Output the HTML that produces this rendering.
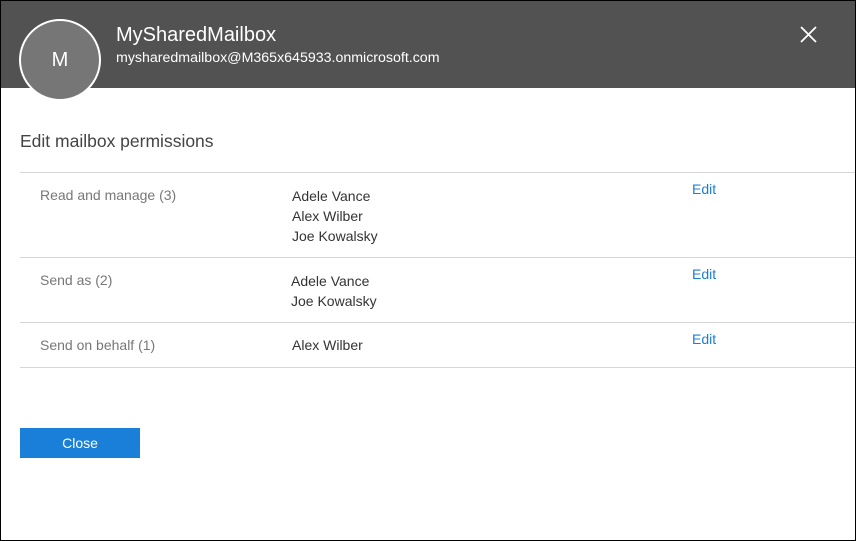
<!DOCTYPE html>
<html><head><style>
*{margin:0;padding:0;box-sizing:border-box}
body{width:856px;height:541px;overflow:hidden;background:#fff;font-family:"Segoe UI","Liberation Sans",sans-serif;position:relative}
.frame{position:absolute;left:0;top:0;width:856px;height:541px;border:1px solid #000;pointer-events:none;z-index:5}
.hdr{position:absolute;left:0;top:0;width:856px;height:88px;background:#525252}
.av{position:absolute;left:19px;top:19px;width:82px;height:82px;border-radius:50%;background:#767676;border:2px solid #fff;color:#fff;font-size:20px;text-align:center;line-height:78px}
.t{position:absolute;color:#fff;white-space:nowrap}
.s{position:absolute;white-space:nowrap;font-size:14px}
.line{position:absolute;left:20px;right:0;height:1px;background:#d6d6d6}
.l{color:#777}.n{color:#333}.e{color:#1a7fd4}
</style></head><body>
<div class="frame"></div>
<div class="hdr"></div>
<div class="av">M</div>
<div class="t" style="left:116px;top:24px;font-size:20px">MySharedMailbox</div>
<div class="t" style="left:116px;top:50px;font-size:14.2px">mysharedmailbox@M365x645933.onmicrosoft.com</div>
<svg style="position:absolute;left:800px;top:26px" width="17" height="17"><path d="M1 1L16 16M16 1L1 16" stroke="#fff" stroke-width="1.8"/></svg>
<div class="s" style="left:20px;top:131px;font-size:17.5px;color:#444">Edit mailbox permissions</div>
<div class="line" style="top:172px"></div>
<div class="s l" style="left:40px;top:187px">Read and manage (3)</div>
<div class="s n" style="left:292px;top:186px;line-height:20px">Adele Vance<br>Alex Wilber<br>Joe Kowalsky</div>
<div class="s e" style="left:692px;top:181px">Edit</div>
<div class="line" style="top:257px"></div>
<div class="s l" style="left:40px;top:272px">Send as (2)</div>
<div class="s n" style="left:291px;top:271px;line-height:20px">Adele Vance<br>Joe Kowalsky</div>
<div class="s e" style="left:692px;top:266px">Edit</div>
<div class="line" style="top:322px"></div>
<div class="s l" style="left:40px;top:337px">Send on behalf (1)</div>
<div class="s n" style="left:292px;top:337px">Alex Wilber</div>
<div class="s e" style="left:692px;top:331px">Edit</div>
<div class="line" style="top:367px"></div>
<div style="position:absolute;left:20px;top:428px;width:120px;height:30px;background:#1a7fd8;color:#fff;font-size:14px;text-align:center;line-height:30px">Close</div>
</body></html>
